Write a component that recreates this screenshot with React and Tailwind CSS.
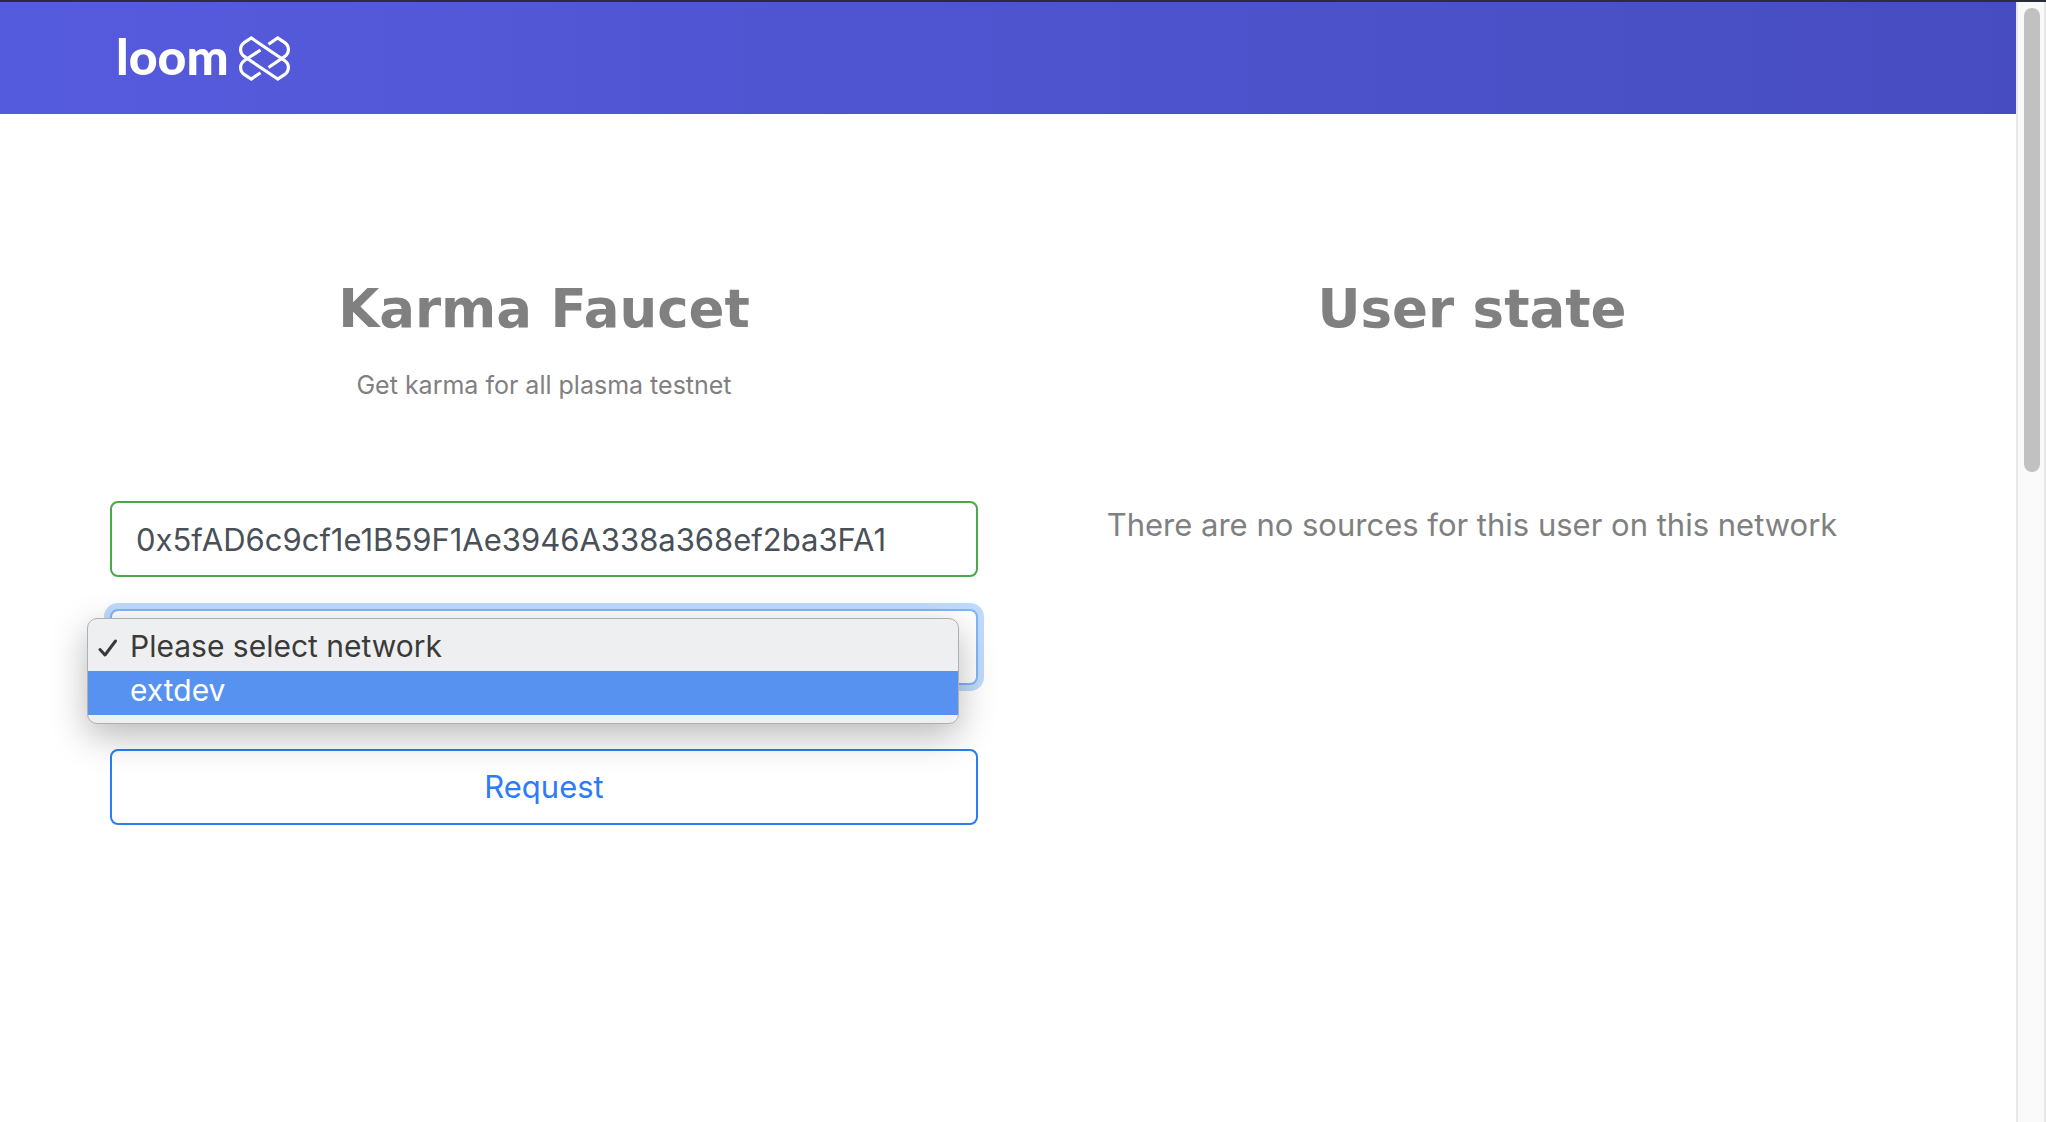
import { useState } from "react";

const networks = [
  { value: "", label: "Please select network" },
  { value: "extdev", label: "extdev" },
];

function LoomMark() {
  return (
    <svg viewBox="0 0 51 45" className="h-[45px] w-[51px]" fill="none" stroke="currentColor" strokeWidth="3.2" aria-hidden="true">
      <path d="M29.5 8.3 L38.7 2 L45.5 6.3 C48.5 8.3 49.4 10.5 49.4 13.5 C49.4 16.5 48.5 18.7 45.5 20.7 L29.5 31.5" />
      <path d="M21.5 14 L5.5 24.5 C2.5 26.5 1.6 28.5 1.6 31.5 C1.6 34.5 2.5 36.7 5.5 38.7 L12.3 43 L21.5 36.7" />
      <path d="M38.7 43 L5.5 20.7 C2.5 18.7 1.6 16.5 1.6 13.5 C1.6 10.5 2.5 8.3 5.5 6.3 L12.3 2 L45.5 24.5 C48.5 26.5 49.4 28.5 49.4 31.5 C49.4 34.5 48.5 36.7 45.5 38.7 Z" />
    </svg>
  );
}

function Header() {
  return (
    <header className="flex h-28 items-center bg-linear-to-r from-[#555bdd] to-[#474dc0] px-[116px] text-white">
      <a href="#" aria-label="loom home" className="flex items-center">
        <span className="w-[123px] pb-1 font-['Lato',sans-serif] text-[50px] leading-[56px] font-black">loom</span>
        <LoomMark />
      </a>
    </header>
  );
}

function Title({ children }) {
  return (
    <h1 className="text-center font-['DejaVu_Sans',sans-serif] text-[53px] leading-[64px] font-bold text-[#808080]">
      {children}
    </h1>
  );
}

function NetworkMenu({ onPick }) {
  return (
    <ul
      role="listbox"
      aria-label="Networks"
      className="absolute top-[9px] right-[19px] -left-[23px] overflow-hidden rounded-[10px] border border-[#b0b0b0] bg-[#eeeff0] py-2 text-[30px] text-[#3a3a3a] shadow-[0_12px_36px_rgba(0,0,0,0.28)]"
    >
      {networks.map((n, i) => (
        <li
          key={n.label}
          role="option"
          aria-selected={i === 0}
          onClick={() => onPick(n.value)}
          className={
            i === 1
              ? "flex h-11 items-center bg-[#5892f1] pb-1.5 pl-[10px] text-white"
              : "flex h-11 items-center pb-1.5 pl-[10px]"
          }
        >
          <span className="flex w-8 shrink-0 items-center pt-1">
            {i === 0 && (
              <svg viewBox="0 0 20 18" className="h-[18px] w-5" fill="none" stroke="currentColor" strokeWidth="3" strokeLinecap="round" strokeLinejoin="round" aria-hidden="true">
                <path d="M2 10.5 L7 16 L17.5 2" />
              </svg>
            )}
          </span>
          {n.label}
        </li>
      ))}
    </ul>
  );
}

export default function App() {
  const [address, setAddress] = useState("0x5fAD6c9cf1e1B59F1Ae3946A338a368ef2ba3FA1");
  const [network, setNetwork] = useState("");

  return (
    <div className="flex min-h-screen flex-col bg-white font-['Inter',sans-serif]">
      <div className="h-0.5 bg-[#2b2d3a]" />
      <div className="flex flex-1">
        <div className="min-w-0 flex-1">
          <Header />
          <main className="grid grid-cols-2 px-20 pt-[163px] text-[#808080]">
            <section className="px-[30px]">
              <Title>Karma Faucet</Title>
              <p className="mt-6 text-center text-[25px] leading-10">Get karma for all plasma testnet</p>
              <form className="mt-24" onSubmit={(e) => e.preventDefault()}>
                <input
                  type="text"
                  aria-label="Address"
                  value={address}
                  onChange={(e) => setAddress(e.target.value)}
                  className="block h-[76px] w-full rounded-lg border-2 border-[#4ca64c] px-6 text-[31px] text-[#495057] outline-none"
                />
                <div className="relative mt-8">
                  <select
                    aria-label="Network"
                    value={network}
                    onChange={(e) => setNetwork(e.target.value)}
                    className="block h-[76px] w-full appearance-none rounded-lg border-2 border-[#80b5f8] bg-white px-6 text-[31px] text-[#495057] ring-6 ring-[#bfdbfb] outline-none"
                  >
                    {networks.map((n) => (
                      <option key={n.label} value={n.value}>{n.label}</option>
                    ))}
                  </select>
                  <NetworkMenu onPick={setNetwork} />
                </div>
                <button
                  type="submit"
                  className="mt-16 block h-[76px] w-full rounded-lg border-2 border-[#2b7cf6] text-[31px] text-[#2b7cf6]"
                >
                  Request
                </button>
              </form>
            </section>
            <section className="px-[30px]">
              <Title>User state</Title>
              <p className="mt-40 text-center text-[31px] leading-12">
                There are no sources for this user on this network
              </p>
            </section>
          </main>
        </div>
        <div className="w-[30px] border-r-2 border-l-2 border-[#e8e8e8] bg-[#fafafa] pt-1.5" aria-hidden="true">
          <div className="mr-1 ml-auto h-[464px] w-4 rounded-full bg-[#c1c1c1]" />
        </div>
      </div>
    </div>
  );
}
